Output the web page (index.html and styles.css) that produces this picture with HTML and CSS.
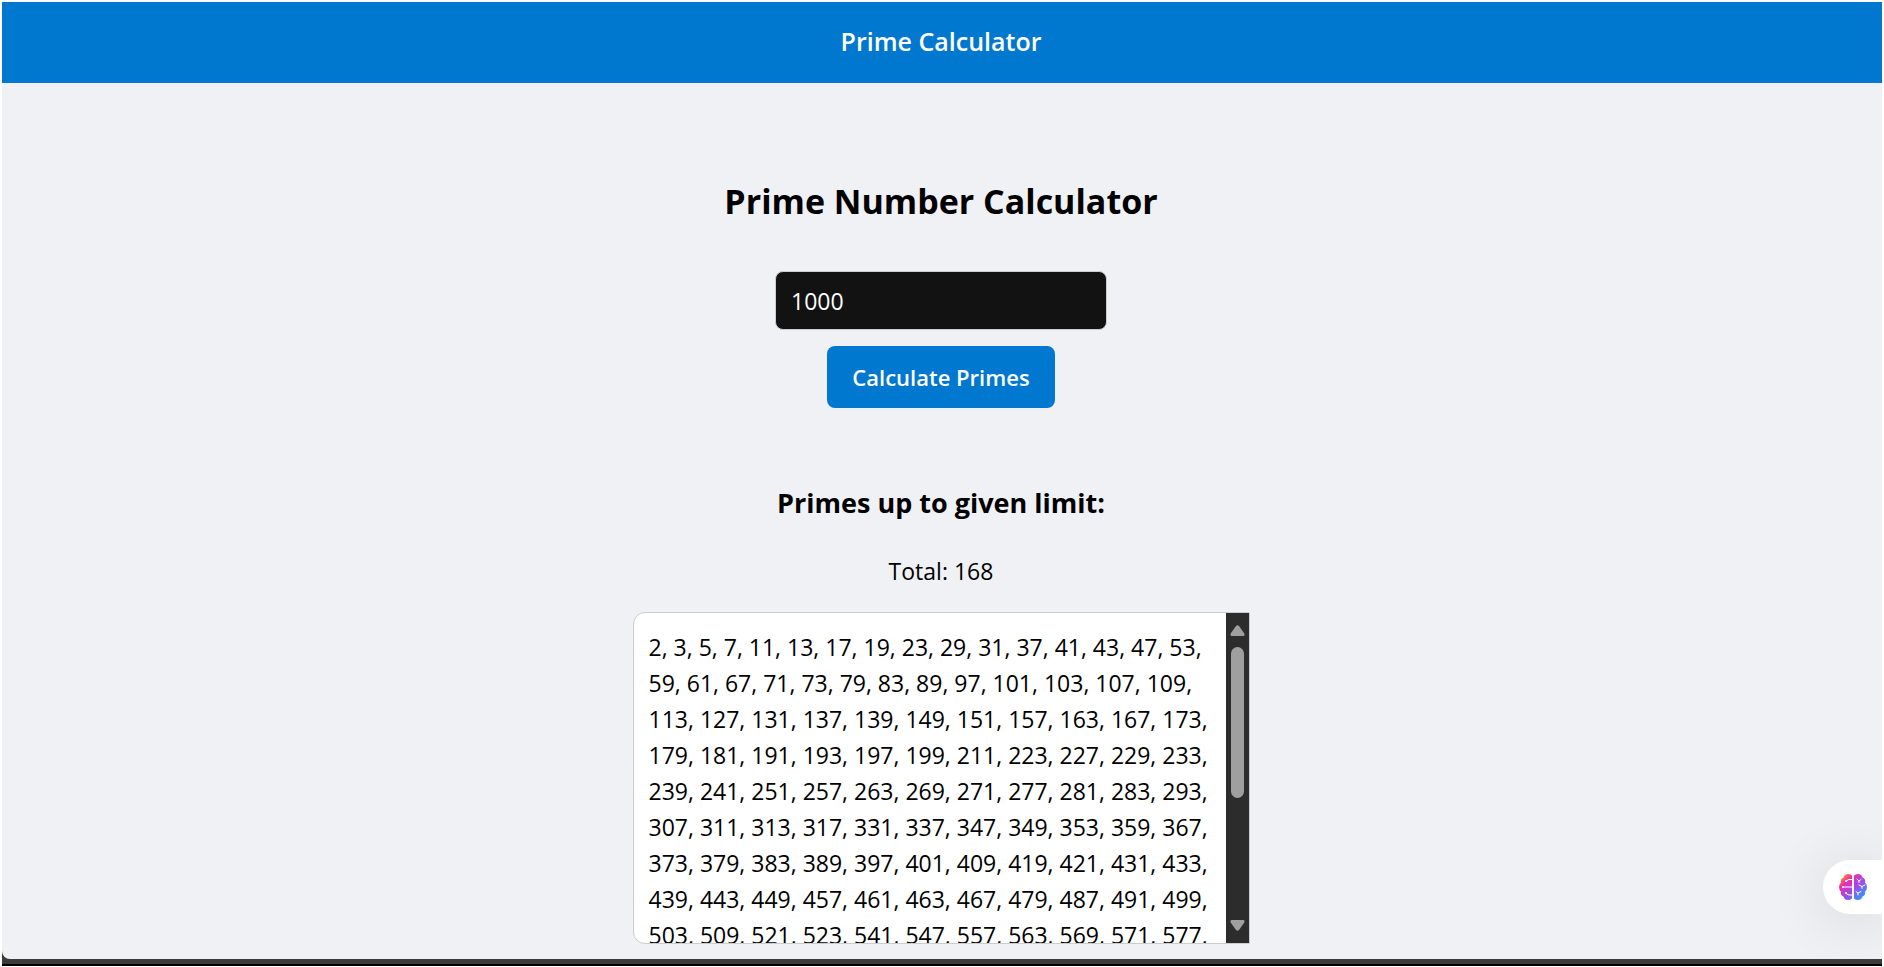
FILE: index.html
```html
<!DOCTYPE html>
<html lang="en">
<head>
<meta charset="utf-8">
<title>Prime Calculator</title>
<link rel="stylesheet" href="styles.css">
</head>
<body>
<div class="window">
<div class="page">
  <header class="topbar">Prime Calculator</header>
  <main class="content">
    <h1 class="title">Prime Number Calculator</h1>
    <form class="form" onsubmit="return false">
      <input class="limit" type="text" inputmode="numeric" value="1000" aria-label="Upper limit">
      <button class="calculate" type="submit">Calculate Primes</button>
    </form>
    <section class="results">
      <h2 class="subtitle">Primes up to given limit:</h2>
      <p class="total">Total: 168</p>
      <div class="list">
        <div class="numbers">2, 3, 5, 7, 11, 13, 17, 19, 23, 29, 31, 37, 41, 43, 47, 53, 59, 61, 67, 71, 73, 79, 83, 89, 97, 101, 103, 107, 109, 113, 127, 131, 137, 139, 149, 151, 157, 163, 167, 173, 179, 181, 191, 193, 197, 199, 211, 223, 227, 229, 233, 239, 241, 251, 257, 263, 269, 271, 277, 281, 283, 293, 307, 311, 313, 317, 331, 337, 347, 349, 353, 359, 367, 373, 379, 383, 389, 397, 401, 409, 419, 421, 431, 433, 439, 443, 449, 457, 461, 463, 467, 479, 487, 491, 499, 503, 509, 521, 523, 541, 547, 557, 563, 569, 571, 577, 587, 593, 599, 601, 607, 613, 617, 619, 631, 641, 643, 647, 653, 659, 661, 673, 677, 683, 691, 701, 709, 719, 727, 733, 739, 743, 751, 757, 761, 769, 773, 787, 797, 809, 811, 821, 823, 827, 829, 839, 853, 857, 859, 863, 877, 881, 883, 887, 907, 911, 919, 929, 937, 941, 947, 953, 967, 971, 977, 983, 991, 997</div>
        <div class="scrollbar" aria-hidden="true">
          <svg class="arrow" viewBox="0 0 15 11"><path d="M6 1Q7.500-.6 9 1L14.300 8.500Q15.200 11 13 11H2Q-.2 11 .7 8.500Z"/></svg>
          <div class="track"><div class="thumb"></div></div>
          <svg class="arrow" viewBox="0 0 15 11"><path d="M6 10Q7.500 11.600 9 10L14.300 2.500Q15.200 0 13 0H2Q-.2 0 .7 2.500Z"/></svg>
        </div>
      </div>
    </section>
  </main>
  <button class="assistant" type="button" aria-label="Open assistant">
    <svg class="brain" viewBox="0 0 28 26">
      <defs>
        <linearGradient id="brain-fill" x1="3" y1="1" x2="25" y2="25" gradientUnits="userSpaceOnUse">
          <stop offset="0" stop-color="#ff9a00"/>
          <stop offset=".25" stop-color="#f02bb0"/>
          <stop offset=".58" stop-color="#9a4bf0"/>
          <stop offset="1" stop-color="#1fa8ff"/>
        </linearGradient>
      </defs>
      <path fill="url(#brain-fill)" d="M13 1.500V24.500Q11.500 26 9 26Q5.500 26 4.500 22.500Q1 21 2 17.500Q0 16 0 13Q0 10 2 8.500Q1 5 4.500 3.800Q5.500 0 9 0Q11.500 0 13 1.500Z"/>
      <path fill="url(#brain-fill)" d="M15 1.500Q16.500 0 19 0Q22.500 0 23.500 3.500Q27 5 26 8.500Q28 10 28 13Q28 16 26 17.500Q27 21 23.500 22.500Q22.500 26 19 26Q16.500 26 15 24.500Z"/>
      <g class="folds">
        <path d="M13 5.500H10Q8 5.500 7.500 7.500M13 13H4M13 21H10Q7.500 21 7 18.500M20 8.500V7L18 5M20 7L22 5.500M23 14.500V12.500L20 11M23 12.500L26 11M19 21V19L17 17.500M19 19L22 17.500"/>
        <circle cx="7" cy="7" r="1"/><circle cx="4" cy="13" r="1"/><circle cx="7" cy="19" r="1"/>
      </g>
    </svg>
  </button>
</div>
</div>
</body>
</html>
```
FILE: styles.css
```css
* {
  box-sizing: border-box;
}

body {
  margin: 0;
  padding: 2px 2px 1px;
  background: #fff;
  color: #000;
  font: 23px/36px "Open Sans", "Noto Sans", sans-serif;
}

.window {
  display: flex;
  height: calc(100vh - 3px);
  padding-bottom: 5px;
  background: #3b3b3b;
  border-bottom: 2px solid #000;
}

.page {
  position: relative;
  display: flex;
  flex: 1;
  flex-direction: column;
  overflow: hidden;
  background: #f0f1f5;
  border-bottom-left-radius: 8px;
}

.topbar {
  flex: none;
  padding: 21px 26px 24px 24px;
  background: #0078d0;
  color: #fff;
  font-size: 25px;
  font-weight: 600;
  text-align: center;
}

.content {
  display: flex;
  flex-direction: column;
  align-items: center;
  padding: 93px 26px 0 24px;
}

.title {
  margin: 0;
  font-size: 34px;
  font-weight: 700;
  line-height: 50px;
}

.form {
  display: flex;
  flex-direction: column;
  align-items: center;
  gap: 16px;
  margin-top: 45px;
}

.limit {
  width: 332px;
  height: 59px;
  padding: 0 15px;
  border: 1px solid #ccc;
  border-radius: 8px;
  background: #121212;
  color: #fff;
  font: inherit;
}

.calculate {
  height: 62px;
  padding: 0 25px;
  border: 0;
  border-radius: 8px;
  background: #0078d0;
  color: #fff;
  font: inherit;
  font-size: 22px;
  font-weight: 600;
}

.results {
  display: flex;
  flex-direction: column;
  align-items: center;
  margin-top: 77px;
}

.subtitle {
  margin: 0;
  font-size: 27px;
  font-weight: 700;
}

.total {
  margin: 32px 0 23px;
}

.list {
  display: flex;
  width: 617px;
  height: 332px;
  overflow: hidden;
  border: 1px solid #ccc;
  border-radius: 12px 0 0 12px;
  background: #fff;
}

.numbers {
  flex: 1;
  padding: 16px 15px;
  overflow-y: auto;
  scrollbar-width: none;
}

.scrollbar {
  display: flex;
  flex: none;
  flex-direction: column;
  align-items: center;
  gap: 11px;
  width: 23px;
  padding: 12px 0;
  background: #2c2c2c;
}

.arrow {
  flex: none;
  width: 15px;
  height: 11px;
  fill: #9f9f9f;
}

.track {
  flex: 1;
  width: 13px;
}

.thumb {
  height: 151px;
  border-radius: 7px;
  background: #9f9f9f;
}

.assistant {
  position: absolute;
  right: 0;
  bottom: 45px;
  display: flex;
  align-items: center;
  width: 59px;
  height: 54px;
  padding: 0 16px;
  border: 0;
  border-radius: 27px 0 0 27px;
  background: #fff;
  box-shadow: 0 6px 60px rgba(0, 0, 0, .12);
}

.brain {
  flex: none;
  width: 28px;
  height: 26px;
}

.folds {
  fill: #fff;
}

.folds path {
  fill: none;
  stroke: #fff;
  stroke-width: 1;
  stroke-linecap: round;
}
```
